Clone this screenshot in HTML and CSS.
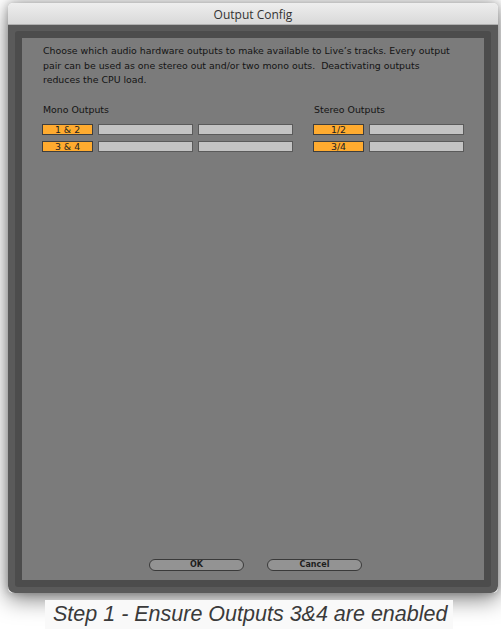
FILE: index.html
```html
<!DOCTYPE html>
<html>
<head>
<meta charset="utf-8">
<link rel="stylesheet" href="styles.css">
</head>
<body>
<div class="window">
  <div class="titlebar">Output Config</div>
  <div class="frame">
    <div class="ring">
      <div class="panel">
        <p class="desc">Choose which audio hardware outputs to make available to Live’s tracks. Every output<br>pair can be used as one stereo out and/or two mono outs.&nbsp; Deactivating outputs<br>reduces the CPU load.</p>
        <div class="groups">
          <div class="group mono">
            <div class="label">Mono Outputs</div>
            <div class="row"><span class="on">1 &amp; 2</span><span class="off"></span><span class="off"></span></div>
            <div class="row"><span class="on">3 &amp; 4</span><span class="off"></span><span class="off"></span></div>
          </div>
          <div class="group stereo">
            <div class="label">Stereo Outputs</div>
            <div class="row"><span class="on">1/2</span><span class="off"></span></div>
            <div class="row"><span class="on">3/4</span><span class="off"></span></div>
          </div>
        </div>
        <div class="buttons">
          <span class="btn">OK</span>
          <span class="btn">Cancel</span>
        </div>
      </div>
    </div>
  </div>
</div>
<div class="caption">Step 1 - Ensure Outputs 3&amp;4 are enabled</div>
</body>
</html>
```
FILE: styles.css
```css
html, body {
  margin: 0;
  padding: 0;
  background: #ffffff;
  width: 501px;
  height: 629px;
  overflow: hidden;
}
body {
  padding-top: 3px;
  box-sizing: border-box;
  font-family: "DejaVu Sans", sans-serif;
}
.window {
  margin-left: 8px;
  width: 490px;
  border-radius: 5px;
  box-shadow: 0 6px 22px rgba(0,0,0,0.5), 0 0 8px rgba(0,0,0,0.25);
}
.titlebar {
  height: 22px;
  line-height: 23px;
  text-align: center;
  font-family: "Open Sans", "Liberation Sans", sans-serif;
  font-size: 12px;
  color: #333;
  background: linear-gradient(#eeeeee, #d9d9d9);
  border-radius: 5px 5px 0 0;
  border-bottom: 1px solid #b0b0b0;
  box-sizing: border-box;
}
.frame {
  background: #5a5a5a;
  padding: 6px 7px 6px 7px;
  border-radius: 0 0 7px 7px;
}
.ring {
  background: #4c4c4c;
  padding: 7px;
  border-radius: 3px;
}
.panel {
  background: #7b7b7b;
  height: 542px;
  box-sizing: border-box;
  padding: 6px 20px 9px 20px;
  display: flex;
  flex-direction: column;
}
.desc {
  margin: 0 0 0 1px;
  white-space: nowrap;
  font-size: 9.4px;
  line-height: 14.5px;
  color: #141414;
}
.groups {
  display: flex;
  gap: 20px;
  margin-top: 16px;
}
.label {
  font-size: 9.4px;
  line-height: 12px;
  color: #141414;
  margin-left: 1px;
  height: 20px;
}
.row {
  display: flex;
  gap: 5px;
  margin-bottom: 6px;
}
.row span {
  height: 11px;
  box-sizing: border-box;
  border: 1px solid #3e3e3e;
  font-size: 9.4px;
  line-height: 9px;
  text-align: center;
  color: #222;
}
.on {
  width: 51px;
  background: #ffab2f;
}
.off {
  width: 95px;
  background: #c3c3c3;
  border-color: #5a5a5a !important;
}
.buttons {
  margin-top: auto;
  display: flex;
  justify-content: center;
  gap: 23px;
  padding-left: 5px;
}
.btn {
  width: 95px;
  height: 12px;
  box-sizing: border-box;
  border: 1px solid #3a3a3a;
  border-radius: 6px;
  background: #939393;
  font-size: 8px;
  font-weight: bold;
  line-height: 10px;
  text-align: center;
  color: #1e1e1e;
}
.caption {
  margin: 7px 0 0 45px;
  width: 408px;
  height: 29px;
  background: #f9f9f9;
  font-family: "Liberation Sans", "Helvetica", sans-serif;
  font-style: italic;
  font-size: 21.5px;
  line-height: 29px;
  color: #3a3a3a;
  padding-left: 8px;
  box-sizing: border-box;
  white-space: nowrap;
}
```
